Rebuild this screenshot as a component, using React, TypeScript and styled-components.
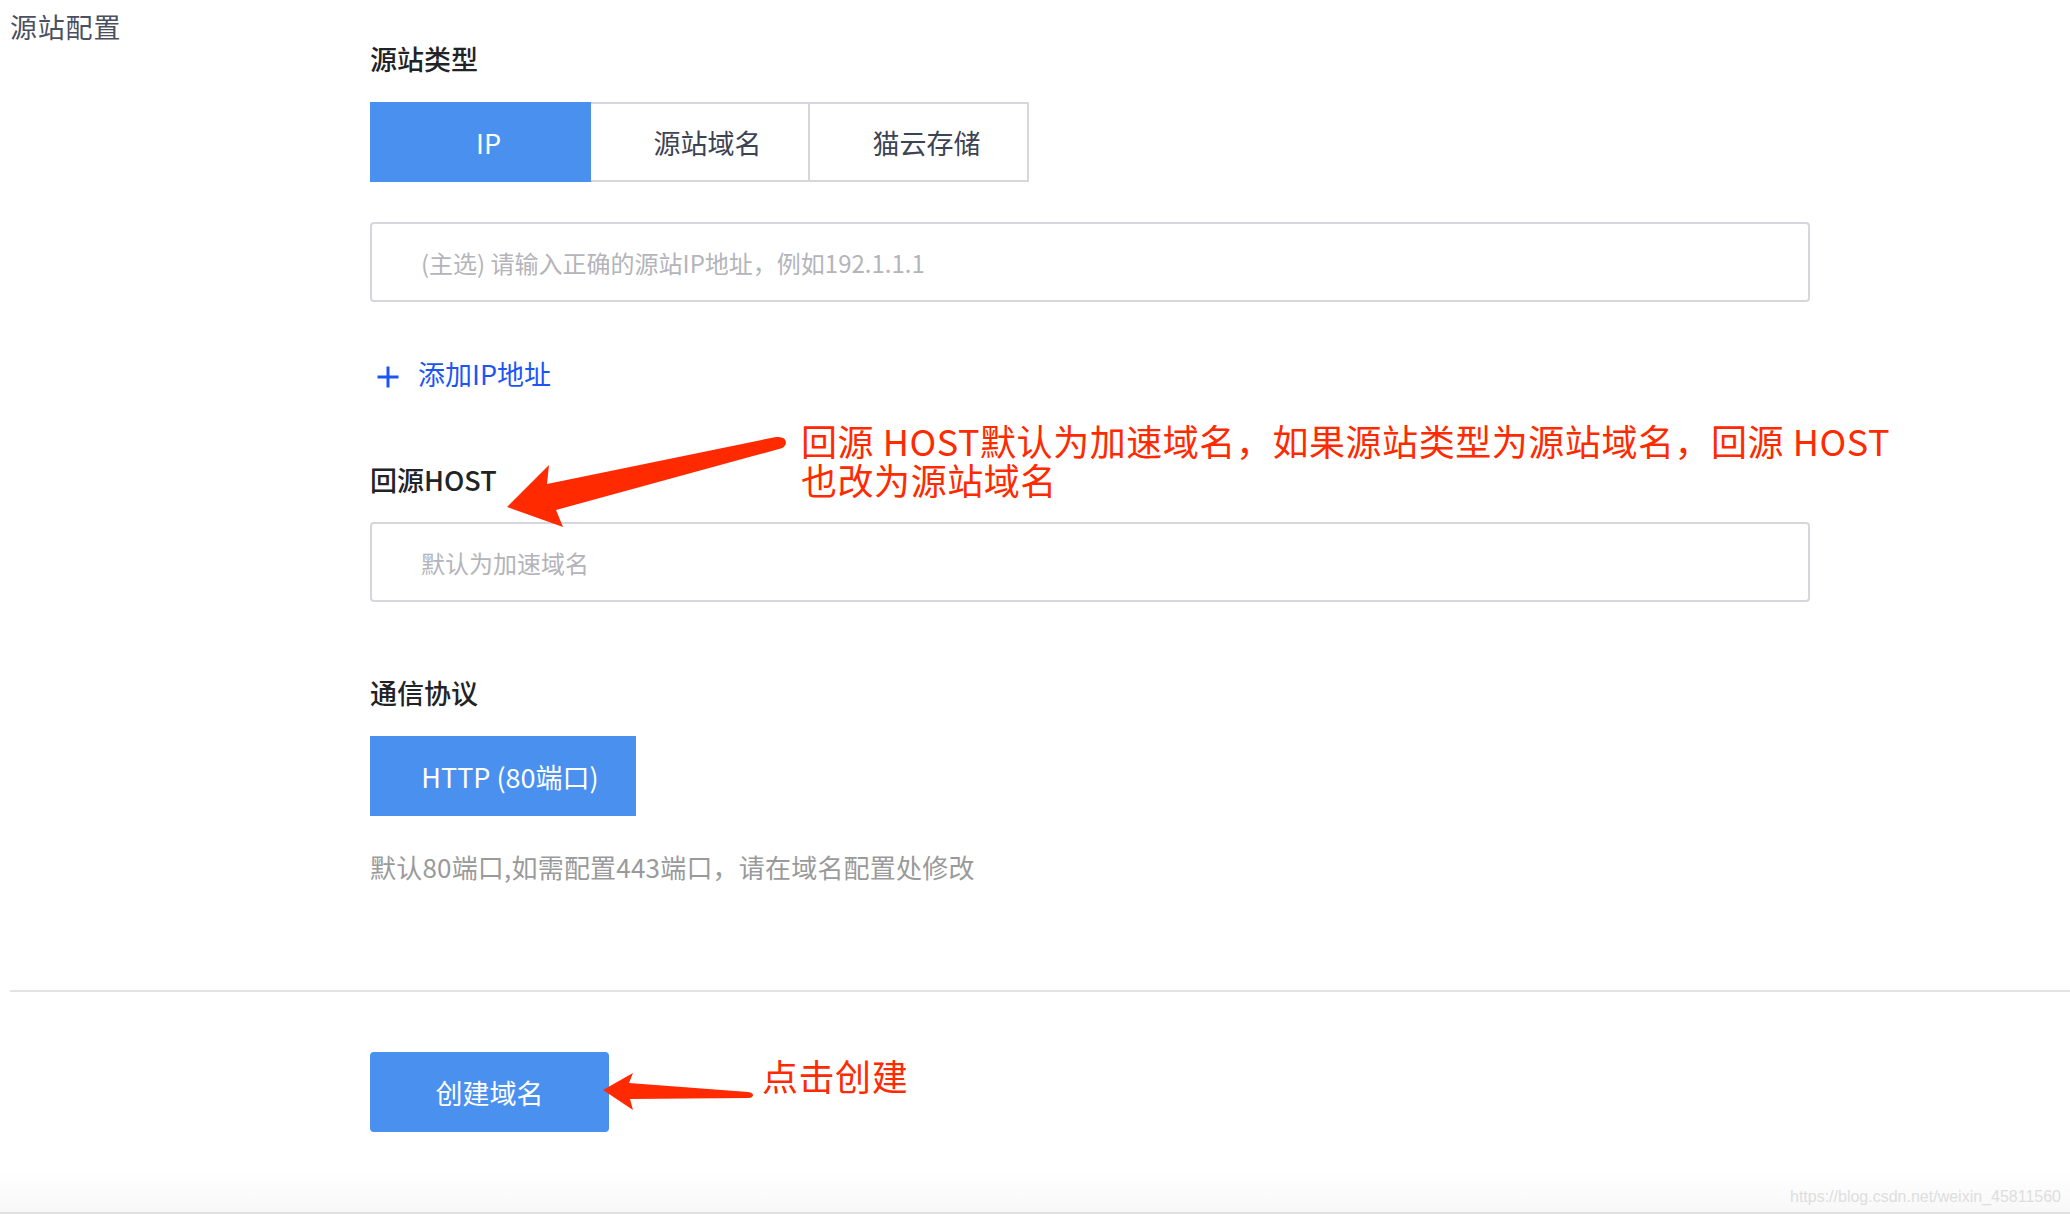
import React from "react";
import styled, { createGlobalStyle } from "styled-components";

const FONT = '"Noto Sans CJK SC", "Noto Sans", "Liberation Sans", sans-serif';

const GlobalStyle = createGlobalStyle`
  html, body {
    margin: 0;
    padding: 0;
    background: #ffffff;
  }
  body {
    font-family: ${FONT};
  }
  * { box-sizing: border-box; }
`;

const Page = styled.div`
  position: relative;
  width: 100%;
  height: 1214px;
  display: flex;
  flex-direction: column;
  overflow: hidden;
  font-family: ${FONT};
`;

const TopSection = styled.section`
  display: grid;
  grid-template-columns: 360px 1fr;
  padding-left: 10px;
`;

const SideTitle = styled.div`
  padding-top: 9px;
  font-size: 27px;
  line-height: 36px;
  letter-spacing: 0.8px;
  color: #4a5061;
`;

const Form = styled.div`
  display: flex;
  flex-direction: column;
  align-items: flex-start;
  padding-top: 40.5px;
`;

const Heading = styled.div<{ $gap?: number }>`
  margin-top: ${(p) => p.$gap ?? 0}px;
  font-size: 27px;
  line-height: 36px;
  font-weight: 500;
  color: #222326;
`;

const TabGroup = styled.div`
  display: flex;
  margin-top: 25.5px;
`;

const Tab = styled.button<{ $active?: boolean }>`
  position: relative;
  width: 221px;
  height: 80px;
  margin: 0 0 0 -2px;
  padding: 0 0 0 16px;
  display: flex;
  align-items: center;
  justify-content: center;
  font-family: ${FONT};
  font-size: 27px;
  color: ${(p) => (p.$active ? "#ffffff" : "#3c4354")};
  background: ${(p) => (p.$active ? "#4990ef" : "#ffffff")};
  border: 2px solid ${(p) => (p.$active ? "#4990ef" : "#d6d6dc")};
  z-index: ${(p) => (p.$active ? 1 : 0)};
  cursor: pointer;
  &:first-child {
    margin-left: 0;
  }
`;

const TextInput = styled.input<{ $gap: number }>`
  margin-top: ${(p) => p.$gap}px;
  width: 1440px;
  height: 80px;
  padding: 0 0 0 49px;
  border: 2px solid #d6d6dc;
  border-radius: 4px;
  font-family: ${FONT};
  font-size: 24px;
  color: #333;
  background: #fff;
  outline: none;
  &::placeholder {
    color: #b4b4ba;
  }
`;

const AddLink = styled.a`
  margin-top: 54px;
  display: flex;
  align-items: center;
  gap: 18px;
  padding-left: 6px;
  font-size: 27px;
  line-height: 36px;
  color: #1b56f5;
  text-decoration: none;
  cursor: pointer;
  svg {
    margin-top: 6px;
  }
`;

const ProtocolButton = styled.button`
  margin-top: 25px;
  width: 266px;
  height: 80px;
  padding: 0 0 0 14px;
  border: none;
  border-radius: 0;
  background: #4990ef;
  color: #ffffff;
  font-family: ${FONT};
  font-size: 27px;
`;

const Hint = styled.div`
  margin-top: 33px;
  font-size: 26px;
  line-height: 36px;
  letter-spacing: 0.2px;
  color: #9a9a9a;
`;

const Divider = styled.hr`
  margin: 105px 0 0 10px;
  border: none;
  height: 2px;
  background: #e3e3e3;
`;

const Footer = styled.footer`
  flex: 1;
  padding: 60px 0 0 370px;
  background: linear-gradient(to bottom, #ffffff 0%, #ffffff 80%, #f8f8f8 100%);
  border-bottom: 2px solid #e0e0e0;
`;

const CreateButton = styled.button`
  width: 239px;
  height: 80px;
  border: none;
  border-radius: 4px;
  background: #4990ef;
  color: #ffffff;
  font-family: ${FONT};
  font-size: 27px;
  cursor: pointer;
`;

const Overlay = styled.svg`
  position: absolute;
  left: 0;
  top: 0;
  width: 2070px;
  height: 1214px;
  pointer-events: none;
`;

const Note = styled.div<{ $x: number; $y: number }>`
  position: absolute;
  left: ${(p) => p.$x}px;
  top: ${(p) => p.$y}px;
  font-family: ${FONT};
  font-size: 36px;
  line-height: 38.5px;
  letter-spacing: 0.55px;
  color: #ff2a00;
  white-space: nowrap;
`;

const Watermark = styled.div`
  position: absolute;
  right: 9px;
  bottom: 8px;
  font-family: "Liberation Sans", Arial, sans-serif;
  font-size: 16px;
  line-height: 18px;
  color: #dedede;
`;

const PlusIcon = () => (
  <svg width="24" height="24" viewBox="0 0 24 24">
    <path d="M1.5 12 H22.5 M12 1.5 V22.5" stroke="#1b56f5" strokeWidth="3" fill="none" />
  </svg>
);

export default function App() {
  return (
    <>
      <GlobalStyle />
      <Page>
        <TopSection>
          <SideTitle>源站配置</SideTitle>
          <Form>
            <Heading>源站类型</Heading>
            <TabGroup>
              <Tab $active>IP</Tab>
              <Tab>源站域名</Tab>
              <Tab>猫云存储</Tab>
            </TabGroup>
            <TextInput $gap={40} placeholder="(主选) 请输入正确的源站IP地址，例如192.1.1.1" />
            <AddLink>
              <PlusIcon />
              <span>添加IP地址</span>
            </AddLink>
            <Heading $gap={69.5}>回源HOST</Heading>
            <TextInput $gap={24.5} placeholder="默认为加速域名" />
            <Heading $gap={73}>通信协议</Heading>
            <ProtocolButton>HTTP (80端口)</ProtocolButton>
            <Hint>默认80端口,如需配置443端口，请在域名配置处修改</Hint>
          </Form>
        </TopSection>
        <Divider />
        <Footer>
          <CreateButton>创建域名</CreateButton>
        </Footer>

        <Overlay viewBox="0 0 2070 1214">
          <path
            d="M507 507 L549 465 L547 484 L776 437 Q786 436 786 443 Q785 448 779 449 L556 510 L563 527 Z"
            fill="#ff2a00"
          />
          <path
            d="M603 1090 L633 1073 L629 1083 L748 1092 Q753 1093 753 1095 Q753 1098 748 1098 L630 1099 L633 1110 Z"
            fill="#ff2a00"
          />
        </Overlay>
        <Note $x={801} $y={421}>
          回源 HOST默认为加速域名，如果源站类型为源站域名，回源 HOST
          <br />
          也改为源站域名
        </Note>
        <Note $x={762} $y={1056}>点击创建</Note>
        <Watermark>https://blog.csdn.net/weixin_45811560</Watermark>
      </Page>
    </>
  );
}
